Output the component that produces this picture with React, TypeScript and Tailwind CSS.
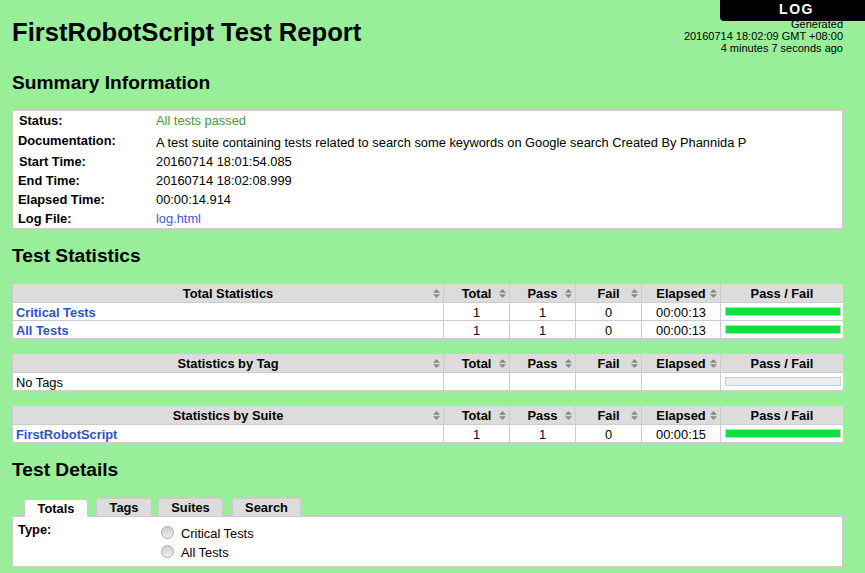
import React from 'react'

const SortIcon = () => (
  <svg width="7" height="9" viewBox="0 0 7 9" className="block">
    <path d="M3.5 0 L7 3.8 H0 Z" fill="#888888" />
    <path d="M3.5 9 L7 5.2 H0 Z" fill="#888888" />
  </svg>
)

const Head = ({ label, noSort }: { label: string; noSort?: boolean }) => (
  <th className="border border-[#cccccc] bg-[#dcdcdc] p-0 h-[19px] font-bold text-[12.85px] leading-[15px] text-black">
    {noSort ? (
      label
    ) : (
      <div className="relative flex items-center justify-center">
        <span>{label}</span>
        <span className="absolute right-[3px] top-[3px]">
          <SortIcon />
        </span>
      </div>
    )}
  </th>
)

const Cell = ({ children }: { children?: React.ReactNode }) => (
  <td className="border border-[#cccccc] p-0 pt-px text-center text-[12.85px] leading-[15px] h-[18px]">{children}</td>
)

const Bar = ({ empty }: { empty?: boolean }) => (
  <td className="border border-[#cccccc] pl-[4px] pr-[2px] py-0 h-[18px]">
    <div className={`h-[9px] border border-[#cccccc] ${empty ? 'bg-[#eeeeee]' : 'bg-[#14dc46]'}`} />
  </td>
)

interface Row {
  name: string
  link?: boolean
  total?: string
  pass?: string
  fail?: string
  elapsed?: string
  empty?: boolean
}

const StatTable = ({ title, rows }: { title: string; rows: Row[] }) => (
  <table className="w-[831px] table-fixed border-collapse bg-white mb-[14px]">
    <colgroup>
      <col className="w-[431px]" />
      <col className="w-[66px]" />
      <col className="w-[66px]" />
      <col className="w-[66px]" />
      <col className="w-[79px]" />
      <col className="w-[123px]" />
    </colgroup>
    <thead>
      <tr>
        <Head label={title} />
        <Head label="Total" />
        <Head label="Pass" />
        <Head label="Fail" />
        <Head label="Elapsed" />
        <Head label="Pass / Fail" noSort />
      </tr>
    </thead>
    <tbody>
      {rows.map(r => (
        <tr key={r.name}>
          <td className="border border-[#cccccc] pb-0 pt-px pl-[3px] text-[12.85px] leading-[15px] h-[18px]">
            {r.link ? <a className="font-bold text-[#2d55c8]">{r.name}</a> : r.name}
          </td>
          <Cell>{r.total}</Cell>
          <Cell>{r.pass}</Cell>
          <Cell>{r.fail}</Cell>
          <Cell>{r.elapsed}</Cell>
          <Bar empty={r.empty} />
        </tr>
      ))}
    </tbody>
  </table>
)

const summary: { label: string; value: string; cls?: string; row: string; head?: string }[] = [
  { label: 'Status:', value: 'All tests passed', cls: 'text-[#449a34]', row: 'h-[19px]', head: 'pl-[6px]' },
  { label: 'Documentation:', value: 'A test suite containing tests related to search some keywords on Google search Created By Phannida P', row: 'h-[22px] pt-[2px]', head: 'pl-[5px] relative -top-[2px]' },
  { label: 'Start Time:', value: '20160714 18:01:54.085', row: 'h-[19px]', head: 'pl-[6px]' },
  { label: 'End Time:', value: '20160714 18:02:08.999', row: 'h-[19px]', head: 'pl-[5px]' },
  { label: 'Elapsed Time:', value: '00:00:14.914', row: 'h-[19px]', head: 'pl-[5px]' },
  { label: 'Log File:', value: 'log.html', cls: 'text-[#3c5ad2]', row: 'h-[19px]', head: 'pl-[5px]' },
]

const tabs = [
  { name: 'Tags', cls: 'ml-[8px] w-[56px]' },
  { name: 'Suites', cls: 'ml-[6px] w-[65px]' },
  { name: 'Search', cls: 'ml-[9px] w-[69px]' },
]

export default function App() {
  return (
    <div className="relative h-[573px] overflow-hidden bg-[#99ef99] pl-[12px] font-['Liberation_Sans',Arial,sans-serif] text-black">
      <div className="absolute right-0 top-0 z-10 flex h-[21px] w-[145px] items-center justify-center rounded-bl-[4px] bg-black pb-[2px] pl-[8px] text-[14px] font-bold tracking-[1.5px] text-white">
        LOG
      </div>

      <div className="flex w-[831px] items-start justify-between">
        <h1 className="mt-[16px] text-[25.6px] font-bold leading-[32px]">FirstRobotScript Test Report</h1>
        <div className="mt-[18px] text-right text-[11px] leading-[12px]">
          Generated
          <br />
          20160714 18:02:09 GMT +08:00
          <br />
          4 minutes 7 seconds ago
        </div>
      </div>

      <h2 className="mt-[17px] text-[19.2px] font-bold leading-[24px]">Summary Information</h2>
      <div className="mt-[15px] flex h-[119px] w-[831px] flex-col border border-[#cccccc] bg-white text-[12.85px] leading-[15px]">
        {summary.map(s => (
          <div key={s.label} className={`flex items-center ${s.row}`}>
            <div className={`w-[143px] shrink-0 font-bold ${s.head}`}>{s.label}</div>
            <div className={`${s.cls ?? ''}`}>{s.value}</div>
          </div>
        ))}
      </div>

      <h2 className="mt-[15px] mb-[15px] text-[19.2px] font-bold leading-[24px]">Test Statistics</h2>
      <StatTable
        title="Total Statistics"
        rows={[
          { name: 'Critical Tests', link: true, total: '1', pass: '1', fail: '0', elapsed: '00:00:13' },
          { name: 'All Tests', link: true, total: '1', pass: '1', fail: '0', elapsed: '00:00:13' },
        ]}
      />
      <StatTable title="Statistics by Tag" rows={[{ name: 'No Tags', empty: true }]} />
      <StatTable
        title="Statistics by Suite"
        rows={[{ name: 'FirstRobotScript', link: true, total: '1', pass: '1', fail: '0', elapsed: '00:00:15' }]}
      />

      <h2 className="pt-px text-[19.2px] font-bold leading-[24px]">Test Details</h2>
      <div className="mt-[16px] flex h-[18px] items-end pl-[12px] text-[12.85px] font-bold">
        <div className="relative top-px flex h-[18px] w-[64px] items-center justify-center rounded-t-[3px] border border-b-0 border-[#cccccc] bg-white">
          Totals
        </div>
        {tabs.map(t => (
          <div
            key={t.name}
            className={`flex h-[18px] items-center justify-center rounded-t-[3px] border border-b-0 border-[#cccccc] bg-[#dcdcdc] ${t.cls}`}
          >
            {t.name}
          </div>
        ))}
      </div>
      <div className="flex h-[51px] w-[831px] border border-[#cccccc] bg-white text-[12.85px] leading-[15px]">
        <div className="w-[148px] shrink-0 pl-[5px] pt-[5px] font-bold">Type:</div>
        <div className="flex flex-col gap-[4px] pt-[9px]">
          {['Critical Tests', 'All Tests'].map(t => (
            <label key={t} className="flex h-[15px] items-center">
              <span className="relative -top-px h-[13px] w-[13px] rounded-full border border-[#a9a9a9] bg-gradient-to-b from-[#cfcfcf] to-[#eeeeee]" />
              <span className="ml-[7px]">{t}</span>
            </label>
          ))}
        </div>
      </div>
    </div>
  )
}
